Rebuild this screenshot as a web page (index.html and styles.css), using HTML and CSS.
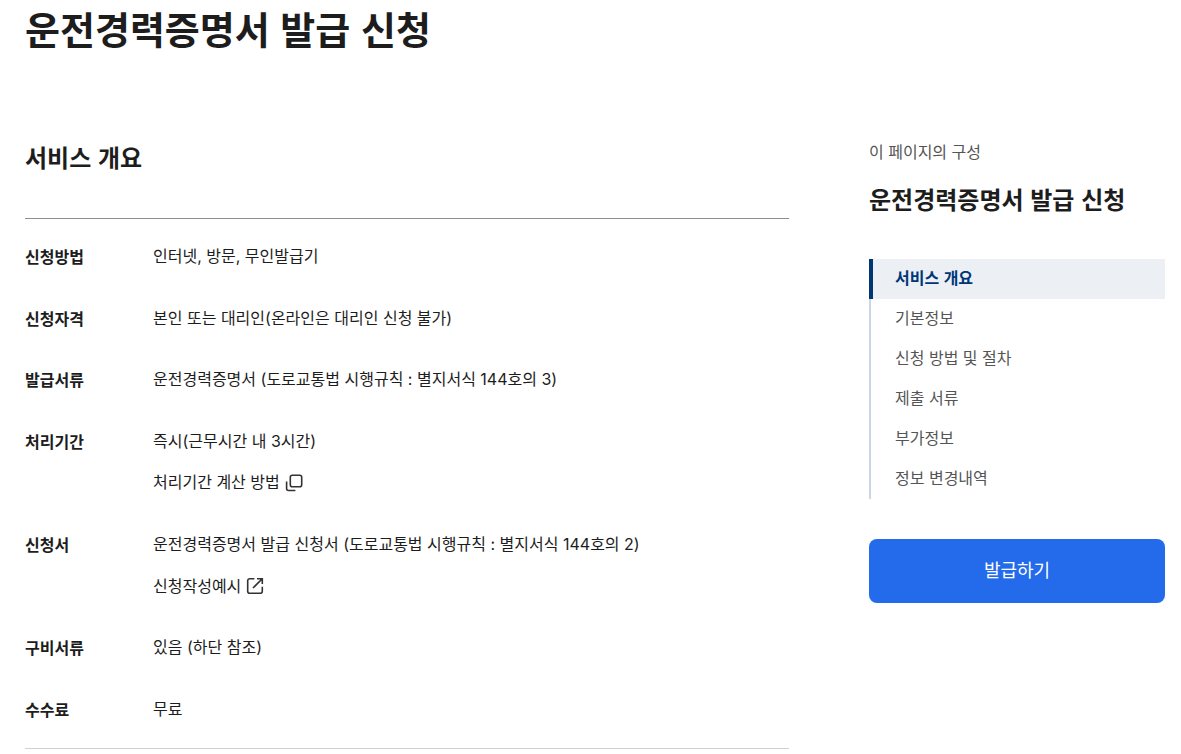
FILE: index.html
```html
<!DOCTYPE html>
<html lang="ko">
<head>
<meta charset="utf-8">
<meta name="viewport" content="width=device-width, initial-scale=1">
<title>운전경력증명서 발급 신청</title>
<link rel="stylesheet" href="styles.css">
</head>
<body>
<div class="page">
  <h1 class="page-title">운전경력증명서 발급 신청</h1>
  <div class="layout">
    <main class="content">
      <h2 class="section-title">서비스 개요</h2>
      <dl class="info">
        <div class="info-row"><dt>신청방법</dt><dd>인터넷, 방문, 무인발급기</dd></div>
        <div class="info-row"><dt>신청자격</dt><dd>본인 또는 대리인(온라인은 대리인 신청 불가)</dd></div>
        <div class="info-row"><dt>발급서류</dt><dd>운전경력증명서 (도로교통법 시행규칙 : 별지서식 144호의 3)</dd></div>
        <div class="info-row">
          <dt>처리기간</dt>
          <dd>
            <span>즉시(근무시간 내 3시간)</span>
            <a class="text-link" href="#period">처리기간 계산 방법
              <svg class="icon" viewBox="0 0 20 20" aria-hidden="true"><rect x="6.3" y="2.3" width="11.4" height="11.4" rx="2"/><path d="M2.6 8.4v7.1a2 2 0 0 0 2 2h6.8"/></svg>
            </a>
          </dd>
        </div>
        <div class="info-row">
          <dt>신청서</dt>
          <dd>
            <span>운전경력증명서 발급 신청서 (도로교통법 시행규칙 : 별지서식 144호의 2)</span>
            <a class="text-link" href="#example">신청작성예시
              <svg class="icon" viewBox="0 0 20 20" aria-hidden="true"><path d="M9.4 2.7H4.7a2 2 0 0 0-2 2v10.6a2 2 0 0 0 2 2h10.6a2 2 0 0 0 2-2v-4.6"/><path d="M12 2.7h5.3V8M17 3 8 12"/></svg>
            </a>
          </dd>
        </div>
        <div class="info-row"><dt>구비서류</dt><dd>있음 (하단 참조)</dd></div>
        <div class="info-row"><dt>수수료</dt><dd>무료</dd></div>
      </dl>
    </main>
    <aside class="side">
      <p class="side-caption">이 페이지의 구성</p>
      <h2 class="side-title">운전경력증명서 발급 신청</h2>
      <nav class="side-nav" aria-label="이 페이지의 구성">
        <a class="side-link is-active" href="#overview" aria-current="true">서비스 개요</a>
        <a class="side-link" href="#basic">기본정보</a>
        <a class="side-link" href="#process">신청 방법 및 절차</a>
        <a class="side-link" href="#documents">제출 서류</a>
        <a class="side-link" href="#extra">부가정보</a>
        <a class="side-link" href="#history">정보 변경내역</a>
      </nav>
      <button class="issue-button" type="button">발급하기</button>
    </aside>
  </div>
</div>
</body>
</html>
```
FILE: styles.css
```css
* {
  box-sizing: border-box;
}

body {
  margin: 0;
  background: #fff;
  color: #1d1d1d;
  font-family: "Noto Sans CJK KR", sans-serif;
  font-size: 16px;
  line-height: 1.6;
}

h1, h2, p, dl, dd {
  margin: 0;
}

.page {
  padding: 0 16px 4px 25px;
}

.page-title {
  font-size: 38px;
  line-height: 56px;
  font-weight: 700;
}

.layout {
  display: grid;
  grid-template-columns: minmax(0, 1fr) 296px;
  gap: 80px;
  align-items: start;
  padding-top: 83px;
}

.section-title {
  padding-bottom: 43px;
  font-size: 24px;
  line-height: 36px;
  font-weight: 700;
}

.info {
  display: flex;
  flex-direction: column;
  gap: 36px;
  padding: 25px 0 26px;
  border-top: 1px solid #8e8e8e;
  border-bottom: 1px solid #d2d2d2;
}

.info-row {
  display: grid;
  grid-template-columns: 112px minmax(0, 1fr);
  gap: 16px;
}

.info-row dt {
  font-weight: 700;
}

.info-row dd {
  display: flex;
  flex-direction: column;
  align-items: flex-start;
  gap: 16px;
  font-family: Inter, "Noto Sans CJK KR", sans-serif;
}

.text-link {
  display: flex;
  align-items: center;
  gap: 4px;
  color: inherit;
  text-decoration: none;
}

.icon {
  width: 20px;
  height: 20px;
  fill: none;
  stroke: #333;
  stroke-width: 1.6;
}

.side-caption {
  color: #555;
}

.side-title {
  padding: 16px 0 42px;
  font-size: 24px;
  line-height: 36px;
  font-weight: 700;
}

.side-nav {
  display: flex;
  flex-direction: column;
}

.side-link {
  padding: 0 0 4px 24px;
  border-left: 2px solid #cdd7e4;
  color: #555;
  line-height: 36px;
  text-decoration: none;
}

.side-link.is-active {
  padding-left: 22px;
  border-left: 4px solid #003675;
  background: #ecf0f5;
  color: #003675;
  font-weight: 700;
}

.issue-button {
  width: 100%;
  height: 64px;
  margin-top: 40px;
  padding: 0 0 4px;
  border: 0;
  border-radius: 8px;
  background: #246beb;
  color: #fff;
  font-family: inherit;
  font-size: 18px;
  cursor: pointer;
}
```
